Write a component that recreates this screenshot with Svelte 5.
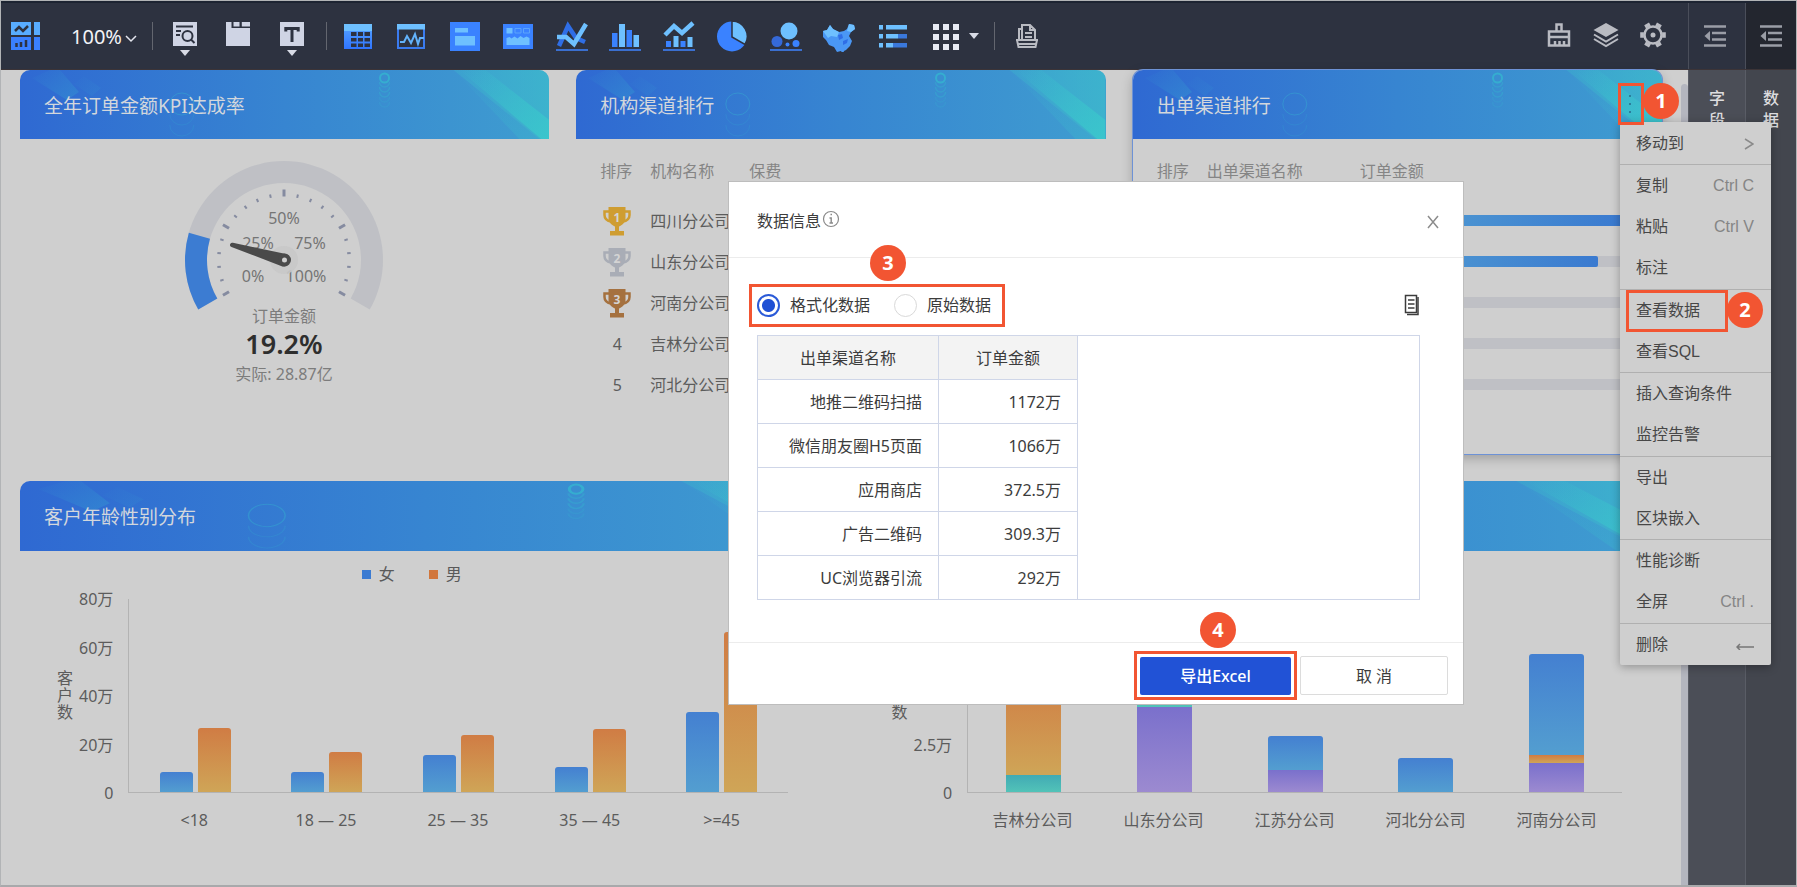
<script>
  let mode = $state('formatted');

  const companies = ['四川分公司', '山东分公司', '河南分公司', '吉林分公司', '河北分公司'];
  const medals = ['#cf9d31', '#a9adb6', '#a5713f'];
  const channelBars = [100, 91, 0, 0, 0];

  const info = [
    ['地推二维码扫描', '1172万'],
    ['微信朋友圈H5页面', '1066万'],
    ['应用商店', '372.5万'],
    ['广告二维码', '309.3万'],
    ['UC浏览器引流', '292万']
  ];

  const ages = [
    { label: '<18', f: 20, m: 64 },
    { label: '18 — 25', f: 20, m: 40 },
    { label: '25 — 35', f: 37, m: 57 },
    { label: '35 — 45', f: 25, m: 63 },
    { label: '>=45', f: 80, m: 160 }
  ];

  const stacks = [
    { label: '吉林分公司', parts: [['orange', 100], ['teal', 17]] },
    { label: '山东分公司', parts: [['teal', 20], ['purple', 85]] },
    { label: '江苏分公司', parts: [['blue', 34], ['purple', 22]] },
    { label: '河北分公司', parts: [['blue', 34]] },
    { label: '河南分公司', parts: [['blue', 101], ['orange', 8], ['purple', 29]] }
  ];

  const menu = [
    [{ t: '移动到', arrow: true }],
    [{ t: '复制', k: 'Ctrl C' }, { t: '粘贴', k: 'Ctrl V' }, { t: '标注' }],
    [{ t: '查看数据', mark: true }, { t: '查看SQL' }],
    [{ t: '插入查询条件' }, { t: '监控告警' }],
    [{ t: '导出' }, { t: '区块嵌入' }],
    [{ t: '性能诊断' }, { t: '全屏', k: 'Ctrl .' }],
    [{ t: '删除', back: true }]
  ];

  const charts = ['table', 'trend', 'card', 'board', 'line', 'bar', 'combo', 'pie', 'bubble', 'map', 'rank', 'more'];

  const ticks = Array.from({ length: 21 }, (_, i) => ({ a: -120 + i * 12, major: i % 5 === 0 }));

  const polar = (r, deg) => {
    const a = (deg * Math.PI) / 180;
    return `${(120 + r * Math.sin(a)).toFixed(2)} ${(110 - r * Math.cos(a)).toFixed(2)}`;
  };
  const ring = (from, to) => {
    const big = to - from > 180 ? 1 : 0;
    return `M${polar(99, from)}A99 99 0 ${big} 1 ${polar(99, to)}L${polar(77, to)}A77 77 0 ${big} 0 ${polar(77, from)}Z`;
  };
</script>

{#snippet icon(name)}
  <svg class="icon" viewBox="0 0 32 32" aria-hidden="true">
    {#if name === 'query'}
      <path fill="#cfd4e4" d="M4 2h24v24H4z" />
      <path stroke="#2d3240" stroke-width="2" fill="none" d="M7 6.500h17M7 11h5M7 15h4" />
      <circle cx="18.500" cy="16" r="5" fill="none" stroke="#2d3240" stroke-width="2" />
      <path stroke="#2d3240" stroke-width="2" d="M22 19.500l3.500 3.500" />
    {:else if name === 'tabs'}
      <path fill="#cfd4e4" d="M4 2h5.500v6H28v18H4z" />
      <path fill="#cfd4e4" d="M11.500 2h6v4.500h-6zM19.800 2H28v4.500h-8.200z" />
    {:else if name === 'text'}
      <path fill="#cfd4e4" d="M4 2h24v24H4z" />
      <path stroke="#2d3240" stroke-width="3" fill="none" d="M9 8.500h14M16 8v14M9.800 7v4.500M22.200 7v4.500" />
    {:else if name === 'table'}
      <path fill="url(#gBlue)" d="M2 4h28v25H2z" />
      <path fill="#6ec0ff" d="M2 4h28v7H2z" />
      <path fill="#2d3240" d="M9 12h5.500v4H9zM16 12h5v4h-5zM22.500 12h5.500v4h-5.500zM9 18h5.500v3.500H9zM16 18h5v3.500h-5zM22.500 18h5.500v3.500h-5.500zM9 23.500h5.500V27H9zM16 23.500h5V27h-5zM22.500 23.500h5.500V27h-5.500z" />
    {:else if name === 'trend'}
      <path fill="none" stroke="#3a7bf0" stroke-width="2" d="M3 5h26v23H3z" />
      <path fill="#6ec0ff" d="M2 4h28v5.500H2z" />
      <path fill="none" stroke="#62b2fb" stroke-width="2" d="M5 22h4l3-6 4 7 4-9 3 10 2-6h4" />
    {:else if name === 'card'}
      <path fill="#3a82ff" d="M1 2h30v29H1z" />
      <path fill="#6ec0ff" d="M6 8h13v4.500H6zM6 16h20v9.500H6z" />
    {:else if name === 'board'}
      <path fill="#3a82ff" d="M1 4h30v25H1z" />
      <path fill="#6ec0ff" d="M4.500 8h6v5.500h-6zM4.500 18l3-1 2 1.500 3-2 3 2 3-2.500 3 2 3-1.500 3 1.500v7h-23z" />
      <path fill="none" stroke="#5ba4fb" d="M13 8.500h6v4.500h-6zM21.500 8.500h6v4.500h-6z" />
    {:else if name === 'line'}
      <path fill="none" stroke="#2f6ee6" stroke-width="4.500" d="M3 26L12 6l8 12 9 4" />
      <path fill="none" stroke="#6ec0ff" stroke-width="4.500" d="M1 17h9l8 7L30 4" />
      <path stroke="#3a6fd0" stroke-width="2" d="M0 30h32" />
    {:else if name === 'bar'}
      <path fill="#3a82ff" d="M3 13h5.500v14H3zM17.500 10h5.500v17h-5.500z" />
      <path fill="#6ec0ff" d="M10 4h6v23h-6zM24.500 15H30v12h-5.500z" />
      <path stroke="#3a6fd0" stroke-width="2" d="M0 30h32" />
    {:else if name === 'combo'}
      <path fill="none" stroke="#6ec0ff" stroke-width="4.500" d="M2 15l9-9 8 7L30 3" />
      <path fill="#3a82ff" d="M3 21h5v6H3zM17.500 21h5v6h-5z" />
      <path fill="#6ec0ff" d="M10.500 16h5v11h-5zM24.500 17h5v10h-5z" />
      <path stroke="#3a6fd0" stroke-width="2" d="M0 30h32" />
    {:else if name === 'pie'}
      <circle cx="16" cy="16.500" r="15" fill="#3a82ff" />
      <path fill="#6ec0ff" stroke="#2d3240" stroke-width="1.500" d="M16 1a15.500 15.500 0 0 1 13 23.500L16 17z" />
    {:else if name === 'bubble'}
      <circle cx="19" cy="11" r="8.500" fill="#6ec0ff" />
      <circle cx="7" cy="21.500" r="5.500" fill="#3569d8" />
      <circle cx="17.500" cy="24.500" r="2" fill="#3a82ff" />
      <circle cx="26" cy="23.500" r="3.500" fill="#3a82ff" />
      <path stroke="#3a6fd0" stroke-width="2" d="M0 30h32" />
    {:else if name === 'map'}
      <path fill="#4a97f4" d="M0 11l4-1 3-5 3 4 6 3 5-1 3-2 2-5 5 1 1 4-4 3-2 4 3 5-2 5-4 4-2 1-1 3-2-3-4 1-3-5-5-2-3-5-3-3z" />
      <path fill="#6ec0ff" d="M0 11l4-1 3-5 3 4 6 3-2 5-6-1-3 2zM26 4l5 1 1 4-4 3-4-1z" />
      <path fill="#2f6ee6" d="M15 15l4-1 1 4-4 2zM20 21l5-2-1 4-4 2z" />
    {:else if name === 'rank'}
      <path fill="#6ec0ff" d="M2 5h4v4.500H2zM9 5h21v4.500H9zM2 14h4v4.500H2zM9 14h12v4.500H9zM2 23h4v4.500H2zM9 23h7v4.500H9z" />
      <path fill="#3a78dc" d="M21 14h9v4.500h-9zM16 23h14v4.500H16z" />
    {:else if name === 'more'}
      <path fill="#e8ebf4" d="M3 4h6v6H3zM13 4h6v6h-6zM23 4h6v6h-6zM3 14h6v6H3zM13 14h6v6h-6zM23 14h6v6h-6zM3 24h6v6H3zM13 24h6v6h-6zM23 24h6v6h-6z" />
    {:else if name === 'print'}
      <path fill="none" stroke="#b9bbc2" stroke-width="2" d="M8 20V9h3V5h8l5 5v10M11 9v11M19 5v5h5M14 13h7M14 17h7M5 20h22M6 20l1.500 7h17L26 20M7 24h18" />
    {:else if name === 'brush'}
      <path fill="none" stroke="#b9bbc2" stroke-width="2.500" d="M13.500 13V5.500h5V12M6 12.500h20v14H6zM6 18h20M12 26v-4M16.500 26v-4M21 26v-4" />
    {:else if name === 'layers'}
      <path fill="#b9bbc2" d="M16 4l12.500 7L16 18 3.500 11z" />
      <path fill="none" stroke="#b9bbc2" stroke-width="2" d="M4 15.500l12 7 12-7M4 20l12 7 12-7" />
    {:else if name === 'gear'}
      <circle cx="16" cy="16" r="8.500" fill="none" stroke="#b9bbc2" stroke-width="2.500" />
      <path stroke="#b9bbc2" stroke-width="5.500" d="M9.600 4.900l1.800 3.200M22.400 4.900l-1.800 3.200M3.200 16h3.700M28.800 16h-3.700M9.600 27.100l1.800-3.200M22.400 27.100l-1.800-3.200" />
      <circle cx="16" cy="16" r="2.500" fill="#b9bbc2" />
    {:else if name === 'indent'}
      <path stroke="#9a9da6" stroke-width="2.500" d="M5 6.500h22M13 13h14M13 19.500h14M5 25.500h22" />
      <path fill="#9a9da6" d="M11 11v10l-5.500-5z" />
    {/if}
  </svg>
{/snippet}

{#snippet caret()}
  <svg class="caret" viewBox="0 0 10 6" aria-hidden="true"><path fill="#d8dbe6" d="M0 0h10L5 6z" /></svg>
{/snippet}

{#snippet head(title)}
  <header class="head">
    <svg class="deco" viewBox="0 0 530 69" preserveAspectRatio="none" aria-hidden="true">
      <path fill="url(#gBand)" d="M12 8L30 0h10l19 22-12 8z" />
      <path fill="url(#gBand)" opacity=".4" d="M54 14l10-8 17 12-9 8z" />
      <g fill="none" stroke="#35b5d0">
        <ellipse cx="162" cy="34" rx="12" ry="11" opacity=".4" />
        <path d="M150 44a12 11 0 0 0 24 0M150 55a12 11 0 0 0 24 0" opacity=".2" />
        <circle cx="365" cy="8" r="4.500" stroke-width="2" opacity=".8" />
        <path stroke-width="1.500" d="M360 12a5 5 0 0 0 10 0M360 17a5 5 0 0 0 10 0M360 22a5 5 0 0 0 10 0" opacity=".4" />
        <path stroke-width="1.500" d="M360 27a5 5 0 0 0 10 0M360 32a5 5 0 0 0 10 0" opacity=".2" />
      </g>
      <path fill="url(#gCorner)" d="M434 0h96v69h-10z" />
      <path fill="url(#gStripe)" d="M440 0h26l64 50v19h-8z" />
      <path fill="url(#gStripe)" opacity=".3" d="M434 0l86 69h-20z" />
    </svg>
    <h2>{title}</h2>
  </header>
{/snippet}

<svg class="defs" width="0" height="0" aria-hidden="true">
  <defs>
    <linearGradient id="gBlue" x1="0" y1="0" x2="0" y2="1">
      <stop offset="0" stop-color="#58a6ff" /><stop offset="1" stop-color="#2f74ff" />
    </linearGradient>
    <linearGradient id="gBand" x1="0" y1="0" x2="1" y2="1">
      <stop offset="0" stop-color="#35a0d2" stop-opacity="0" /><stop offset="1" stop-color="#35a0d2" stop-opacity=".4" />
    </linearGradient>
    <linearGradient id="gCorner" x1="0" y1="0" x2="1" y2="0">
      <stop offset="0" stop-color="#3cbccc" stop-opacity=".3" /><stop offset="1" stop-color="#3cbccc" stop-opacity=".7" />
    </linearGradient>
    <linearGradient id="gStripe" x1="0" y1="0" x2="1" y2="1">
      <stop offset="0" stop-color="#3acacc" stop-opacity="0" /><stop offset="1" stop-color="#3acacc" stop-opacity=".8" />
    </linearGradient>
  </defs>
</svg>

<div class="app">
  <div class="toolbar" role="toolbar">
    <a class="logo" href="#home" aria-label="仪表板">
      <svg viewBox="0 0 30 30" width="30" height="30" aria-hidden="true">
        <path fill="#58acff" d="M0 1h20v13H0zM23 1h6v13h-6z" />
        <path fill="#3a80ff" d="M0 16h20v13H0zM23 16h6v13h-6z" />
        <path fill="none" stroke="#2d3240" stroke-width="2.500" d="M4 10l4-4 4 4 5-5" />
        <path fill="none" stroke="#2d3240" stroke-width="2.500" d="M5.500 26v-4M10 26v-5M15 26v-7" />
      </svg>
    </a>
    <label class="zoom">
      <select aria-label="缩放"><option>100%</option></select>
      <svg viewBox="0 0 12 8" width="12" height="8" aria-hidden="true"><path fill="none" stroke="#e4e6ee" stroke-width="1.500" d="M1 1l5 5 5-5" /></svg>
    </label>
    <span class="rule"></span>
    <div class="tools three">
      <button aria-label="查询">{@render icon('query')}{@render caret()}</button>
      <button aria-label="标签页">{@render icon('tabs')}</button>
      <button aria-label="文本">{@render icon('text')}{@render caret()}</button>
    </div>
    <span class="rule"></span>
    <div class="tools twelve">
      {#each charts as c}
        <button aria-label={c} class:more={c === 'more'}>{@render icon(c)}{#if c === 'more'}{@render caret()}{/if}</button>
      {/each}
    </div>
    <span class="rule"></span>
    <button class="print" aria-label="打印">{@render icon('print')}</button>
    <div class="right">
      <button aria-label="清理">{@render icon('brush')}</button>
      <button aria-label="图层">{@render icon('layers')}</button>
      <button aria-label="设置">{@render icon('gear')}</button>
    </div>
    <button class="fold" aria-label="收起字段">{@render icon('indent')}</button>
    <button class="fold dark" aria-label="收起数据">{@render icon('indent')}</button>
  </div>

  <div class="main">
    <main class="canvas">
      <div class="row thirds">
        <section class="card">
          {@render head('全年订单金额KPI达成率')}
          <svg class="gauge" viewBox="0 0 240 240" width="240" height="240">
            <path d={ring(-120, 120)} fill="#bfc0c5" />
            <path d={ring(-120, -74)} fill="#3c7cd2" />
            {#each ticks as t}
              <path d={`M${polar(63.5, t.a)}L${polar(t.major ? 70.5 : 67, t.a)}`} stroke="#858ba0" stroke-width={t.major ? 3 : 2} />
            {/each}
            <g font-size="16" fill="#757575" text-anchor="middle">
              <text x="120" y="74">50%</text>
              <text x="94" y="99">25%</text>
              <text x="146" y="99">75%</text>
              <text x="89" y="132">0%</text>
              <text x="142" y="132">100%</text>
            </g>
            <circle cx="120" cy="110" r="14" fill="#c8c8c8" fill-opacity=".9" />
            <path fill="#4a4a4a" d="M67.500 97a2.200 2.200 0 0 1 1.400-4.200L122 104a6.500 6.500 0 0 1-3.600 12.400z" />
            <circle cx="120.500" cy="110" r="4.500" fill="#cfcfcf" stroke="#4a4a4a" stroke-width="4" />
            <g text-anchor="middle">
              <text x="120" y="172" font-size="16" fill="#7c7c7c">订单金额</text>
              <text x="120" y="204" font-size="27" font-weight="600" fill="#2e2e2e">19.2%</text>
              <text x="120" y="230" font-size="16" fill="#7c7c7c">实际: 28.87亿</text>
            </g>
          </svg>
        </section>

        <section class="card">
          {@render head('机构渠道排行')}
          <table class="rank">
            <colgroup><col class="c-no" /><col class="c-org" /><col /></colgroup>
            <thead><tr><th>排序</th><th>机构名称</th><th>保费</th></tr></thead>
            <tbody>
              {#each companies as name, i}
                <tr>
                  <td>
                    <span class="no">
                      {#if i < 3}
                        <svg viewBox="0 0 30 30" width="30" height="30">
                          <path fill="none" stroke={medals[i]} stroke-width="2.500" d="M7 5.500H2.500V9c0 4 3 6 7 6.500M23 5.500h4.500V9c0 4-3 6-7 6.500" />
                          <path fill={medals[i]} d="M6.500 1h17v11c0 5-3.500 7-6.500 8.500V25h5v4.500H8V25h5v-4.500c-3-1.500-6.500-3.500-6.500-8.500z" />
                          <text x="15" y="16" font-size="12" font-weight="700" fill="#d4d4d4" text-anchor="middle">{i + 1}</text>
                        </svg>
                      {:else}{i + 1}{/if}
                    </span>
                  </td>
                  <td>{name}</td>
                  <td></td>
                </tr>
              {/each}
            </tbody>
          </table>
        </section>

        <section class="card active">
          {@render head('出单渠道排行')}
          <button class="dots" aria-label="更多">
            <svg viewBox="0 0 4 20" width="4" height="20" aria-hidden="true"><path fill="#2b7f9c" d="M1 1h2v2H1zM1 9h2v2H1zM1 17h2v2H1z" /></svg>
            <span class="badge b1">1</span>
          </button>
          <table class="rank">
            <colgroup><col class="c-no" /><col class="c-channel" /><col /></colgroup>
            <thead><tr><th>排序</th><th>出单渠道名称</th><th>订单金额</th></tr></thead>
            <tbody>
              {#each channelBars as v}
                <tr><td></td><td></td><td><div class="track"><div class="fill" style="width: {v}%"></div></div></td></tr>
              {/each}
            </tbody>
          </table>
        </section>
      </div>

      <div class="row halves">
        <section class="card">
          {@render head('客户年龄性别分布')}
          <div class="legend"><span class="f">女</span><span class="m">男</span></div>
          <div class="chart">
            <div class="ytitle">客户数</div>
            <div class="yaxis"><span>80万</span><span>60万</span><span>40万</span><span>20万</span><span>0</span></div>
            <div class="plot">
              {#each ages as a}
                <div class="slot pair">
                  <i class="blue" style="height: {a.f}px"></i>
                  <i class="orange" style="height: {a.m}px"></i>
                </div>
              {/each}
            </div>
            <div class="xaxis">{#each ages as a}<span>{a.label}</span>{/each}</div>
          </div>
        </section>

        <section class="card">
          {@render head('')}
          <div class="legend"></div>
          <div class="chart">
            <div class="ytitle">客户数</div>
            <div class="yaxis low"><span>2.5万</span><span>0</span></div>
            <div class="plot">
              {#each stacks as s}
                <div class="slot stack">
                  {#each s.parts as p}<i class={p[0]} style="height: {p[1]}px"></i>{/each}
                </div>
              {/each}
            </div>
            <div class="xaxis">{#each stacks as s}<span>{s.label}</span>{/each}</div>
          </div>
        </section>
      </div>
      <span class="thumb"></span>
    </main>
    <aside class="rail"><span>字</span><span>段</span></aside>
    <aside class="rail dark"><span>数</span><span>据</span></aside>
  </div>

  <nav class="menu">
    {#each menu as group}
      <div class="group">
        {#each group as m}
          <button class="item">
            <span>{m.t}</span>
            {#if m.k}<kbd>{m.k}</kbd>{/if}
            {#if m.arrow}<svg viewBox="0 0 10 14" width="10" height="14" aria-hidden="true"><path fill="none" stroke="#8a8a8a" stroke-width="1.500" d="M1 2l8 5-8 5" /></svg>{/if}
            {#if m.back}<svg viewBox="0 0 18 10" width="18" height="10" aria-hidden="true"><path fill="none" stroke="#777" stroke-width="1.500" d="M4 4L1 7l3 3M1 7h17" /></svg>{/if}
            {#if m.mark}<span class="mark"></span><span class="badge b2">2</span>{/if}
          </button>
        {/each}
      </div>
    {/each}
  </nav>

  <div class="modal" role="dialog" aria-labelledby="modal-title">
    <div class="mhead">
      <h3 id="modal-title">数据信息</h3>
      <svg class="info" viewBox="0 0 18 18" width="18" height="18" aria-hidden="true">
        <circle cx="9" cy="9" r="7.500" fill="none" stroke="#8a8a8a" stroke-width="1.200" />
        <path fill="none" stroke="#8a8a8a" stroke-width="1.400" d="M7.500 8h1.700v5M7.500 13h3.500M8.500 4.500h1.500" />
      </svg>
      <button class="close" aria-label="关闭">
        <svg viewBox="0 0 12 14" width="12" height="14" aria-hidden="true"><path stroke="#8c8c8c" stroke-width="1.500" d="M1 1l10 12M11 1L1 13" /></svg>
      </button>
    </div>
    <div class="mbody">
      <div class="options">
        <div class="radios">
          <label><input type="radio" name="mode" value="formatted" bind:group={mode} />格式化数据</label>
          <label><input type="radio" name="mode" value="raw" bind:group={mode} />原始数据</label>
          <span class="badge b3">3</span>
        </div>
        <button aria-label="复制数据">
          <svg viewBox="0 0 16 22" width="16" height="22" aria-hidden="true">
            <path fill="none" stroke="#3c3c3c" stroke-width="1.500" d="M1.500 1.500h11v17h-11z" />
            <path fill="none" stroke="#3c3c3c" stroke-width="1.500" d="M14 3v17.500H3" />
            <path stroke="#3c3c3c" stroke-width="1.500" d="M4 6h6.500M4 10h6.500M4 14h6.500" />
          </svg>
        </button>
      </div>
      <div class="sheet">
        <table>
          <thead><tr><th>出单渠道名称</th><th>订单金额</th></tr></thead>
          <tbody>
            {#each info as r}<tr><td>{r[0]}</td><td>{r[1]}</td></tr>{/each}
          </tbody>
        </table>
      </div>
    </div>
    <div class="mfoot">
      <span class="ring"><button class="primary">导出Excel</button><span class="badge b4">4</span></span>
      <button class="cancel">取 消</button>
    </div>
  </div>
</div>

<style>
  :global(body) { margin: 0; background: #cfcfcf; }
  * { box-sizing: border-box; }
  .app {
    position: relative;
    display: flex;
    flex-direction: column;
    min-height: 100vh;
    overflow: hidden;
    border: 1px solid #b2b4b6;
    border-bottom: 2px solid #a8a9ab;
    background: #cfcfcf;
    color: #4a4a4a;
    font: 16px/24px "Noto Sans", "Noto Sans CJK SC", sans-serif;
  }
  .defs { position: absolute; }
  button { font: inherit; color: inherit; background: none; border: 0; padding: 0; margin: 0; cursor: pointer; }
  h2, h3 { margin: 0; font-weight: 400; }
  svg { display: block; flex: none; }

  .toolbar { display: flex; align-items: center; height: 69px; padding-left: 10px; background: #2d3240; border-top: 2px solid #1d2432; border-bottom: 1px solid #3c3437; }
  .logo { margin-right: 30px; }
  .zoom { position: relative; display: flex; align-items: center; width: 81px; padding-top: 2px; }
  .zoom select { appearance: none; width: 66px; padding: 0; border: 0; background: none; color: #f2f3f7; font: 20px/28px "Noto Sans", sans-serif; }
  .zoom svg { position: absolute; left: 54px; top: 14px; }
  .rule { width: 1px; height: 28px; background: #63666f; }
  .tools { display: grid; }
  .three { grid-template-columns: repeat(3, 1fr); width: 161px; margin: 0 7px 0 5px; }
  .twelve { grid-template-columns: repeat(12, 1fr); width: 642px; margin: 0 21px 0 4px; }
  .tools button, .print, .right button { position: relative; display: flex; justify-content: center; }
  .icon { width: 32px; height: 32px; }
  .caret { position: absolute; width: 10px; height: 6px; bottom: -4px; left: calc(50% - 5px); }
  .more .caret { left: auto; right: -6px; bottom: 13px; }
  .print { margin-left: 16px; }
  .right { display: flex; gap: 15px; margin: 0 19px 2px auto; }
  .fold { display: flex; align-items: center; justify-content: center; width: 57px; height: 100%; padding-right: 5px; border-left: 1px solid #4a4e5a; }
  .fold.dark { width: 51px; padding: 0; background: #23262f; }

  .main { flex: 1; display: flex; }
  .canvas { position: relative; flex: 1; min-width: 0; display: flex; flex-direction: column; gap: 27px; padding: 0 26px 0 19px; }
  .row { display: grid; column-gap: 27px; }
  .thirds { grid-template-columns: repeat(3, 1fr); height: 384px; }
  .halves { grid-template-columns: repeat(2, 1fr); }
  .card { position: relative; min-width: 0; }
  .active { box-shadow: 0 0 0 1px #6d92d6, 0 4px 12px rgba(0, 0, 0, .25); border-radius: 10px 10px 0 0; }
  .head { position: relative; display: flex; align-items: center; height: 69px; padding: 2px 24px 0; overflow: hidden; border-radius: 10px 10px 0 0; background: linear-gradient(90deg, #2f69d2, #3785d1 50%, #3f9dd0); color: #d3d7dc; }
  .halves .head { height: 70px; }
  .deco { position: absolute; inset: 0; width: 100%; height: 100%; }
  .head h2 { position: relative; font-size: 19px; line-height: 28px; }
  .gauge { margin: 11px auto 0; position: relative; left: -1px; }

  .rank { width: calc(100% - 24px); margin: 3px 0 0 24px; border-collapse: collapse; table-layout: fixed; }
  .rank th { height: 58px; padding: 0; text-align: left; font-weight: 400; color: #858585; }
  .rank td { height: 41px; padding: 0; white-space: nowrap; color: #5c5c5c; }
  .c-no { width: 50px; }
  .c-org { width: 99px; }
  .c-channel { width: 153px; }
  .no { display: flex; justify-content: center; width: 34px; }
  .track { height: 11px; margin-right: 40px; background: #bfc0c5; border-radius: 2px; }
  .fill { height: 11px; border-radius: 2px; background: linear-gradient(90deg, #55a2d2, #3a7ad0); }

  .dots { position: absolute; top: 13px; right: 18px; display: flex; align-items: center; justify-content: center; width: 26px; height: 42px; border: 3px solid #f25532; padding-right: 2px; z-index: 3; }
  .badge { position: absolute; width: 36px; height: 36px; border-radius: 50%; background: #f25532; color: #fff; font-size: 20px; font-weight: 700; line-height: 36px; text-align: center; }
  .b1 { left: 22px; top: -3px; }

  .legend { display: flex; justify-content: center; gap: 34px; height: 48px; padding: 0 24px 9px 0; color: #5a5a5a; }
  .legend span { display: flex; align-items: center; gap: 8px; padding-top: 7px; }
  .legend span::before { content: ""; width: 9px; height: 9px; background: #3b7bd2; }
  .legend .m::before { background: #d1763c; }
  .chart { display: grid; grid-template-columns: 38px auto 1fr; grid-template-rows: 194px 54px; padding: 0 40px 34px 15px; color: #5c5c5c; }
  .ytitle { width: 16px; margin: 71px 0 0 22px; line-height: 17px; overflow-wrap: anywhere; }
  .yaxis { display: flex; flex-direction: column; justify-content: space-between; margin: -12px 0; padding-left: 6px; text-align: right; white-space: nowrap; }
  .low { justify-content: flex-end; gap: 24px; }
  .plot { display: grid; grid-template-columns: repeat(5, 1fr); margin-left: 15px; border: solid #b3b3b3; border-width: 0 0 1px 1px; }
  .slot { display: flex; min-width: 0; }
  .pair { align-items: flex-end; justify-content: center; gap: 5px; }
  .pair i { width: 33px; border-radius: 3px 3px 0 0; }
  .stack { flex-direction: column; justify-content: flex-end; align-items: center; }
  .stack i { width: 55px; }
  .stack i:first-child { border-radius: 3px 3px 0 0; }
  .blue { background: linear-gradient(#4480d1, #539ed0); }
  .orange { background: linear-gradient(#d07c44, #cfa557); }
  .teal { background: linear-gradient(#41aab4, #52c3b8); }
  .purple { background: linear-gradient(#7a70cc, #9c8ad0); }
  .xaxis { grid-column: 3; display: grid; grid-template-columns: repeat(5, 1fr); margin-left: 15px; padding-top: 15px; text-align: center; white-space: nowrap; }

  .thumb { position: absolute; right: 0; top: 14px; bottom: 0; width: 7px; background: #b4b6bf; border-radius: 4px 4px 0 0; }
  .rail { display: flex; flex-direction: column; align-items: center; width: 57px; padding-top: 17px; border-left: 1px solid #5a5d66; background: #4b4e57; color: #dcdcde; font-weight: 500; line-height: 22px; }
  .rail.dark { width: 51px; background: #43464e; }

  .menu { position: absolute; top: 121px; right: 25px; width: 151px; padding-top: 1px; background: #cfcfcf; border-radius: 2px; box-shadow: 0 2px 10px rgba(0, 0, 0, .3); color: #474747; font-family: "Liberation Sans", "Noto Sans CJK SC", sans-serif; }
  .group { border-bottom: 1px solid #b0b0b0; }
  .group:nth-child(even) { padding-bottom: 1px; }
  .group:last-child { border: 0; }
  .item { position: relative; display: flex; align-items: center; justify-content: space-between; width: 100%; height: 41px; padding: 1px 17px 0 16px; }
  .item kbd { font: inherit; color: #858585; }
  .mark { position: absolute; left: 6px; top: 0; width: 102px; height: 42px; border: 3px solid #f25532; }
  .b2 { left: 107px; top: 2px; font-family: "Noto Sans", sans-serif; }

  .modal { position: absolute; top: 180px; left: 727px; right: 332px; background: #fff; border: 1px solid #bdbdbd; color: #3c3c3c; }
  .mhead { display: flex; align-items: center; height: 76px; padding: 2px 24px 0 28px; border-bottom: 1px solid #ececec; }
  .mhead h3 { font-size: 16px; }
  .info { margin: 0 0 4px 1px; }
  .close { margin: 3px 0 0 auto; }
  .mbody { padding: 25px 43px 42px 28px; }
  .options { display: flex; align-items: center; justify-content: space-between; height: 44px; }
  .radios { position: relative; display: flex; align-items: center; gap: 24px; height: 43px; margin-left: -8px; padding: 0 11px 0 5px; border: 3px solid #f25532; }
  .radios label { display: flex; align-items: center; gap: 10px; }
  .radios input { appearance: none; width: 23px; height: 23px; margin: 0; border: 1px solid #d9d9d9; border-radius: 50%; background: #fff; }
  .radios input:checked { border: 2px solid #2a5ad8; background: radial-gradient(circle, #1f50d4 0 6px, #fff 7px); }
  .b3 { left: 118px; top: -42px; }
  .sheet { margin-top: 8px; border: 1px solid #cfd6e8; }
  .sheet table { border-collapse: collapse; margin: -1px; }
  .sheet th, .sheet td { height: 44px; padding: 0 16px; border: 1px solid #cfd6e8; }
  .sheet th { width: 181px; background: #f3f3f3; font-weight: 400; }
  .sheet th:last-child { width: 139px; }
  .sheet td { text-align: right; }
  .mfoot { display: flex; justify-content: flex-end; gap: 3px; height: 62px; padding: 8px 15px 0 0; border-top: 1px solid #ececec; }
  .ring { position: relative; height: 49px; padding: 3px; border: 3px solid #f25532; }
  .primary { width: 151px; height: 38px; background: #2152d6; color: #fff; font-weight: 500; border-radius: 2px; }
  .cancel { width: 148px; height: 39px; margin-top: 5px; border: 1px solid #dcdcdc; border-radius: 2px; }
  .b4 { left: 63px; top: -42px; }
</style>
